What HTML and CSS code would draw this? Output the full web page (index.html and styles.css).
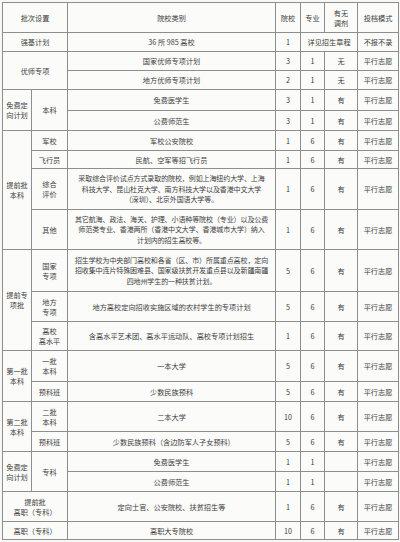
FILE: index.html
```html
<!DOCTYPE html>
<html lang="zh">
<head>
<meta charset="utf-8">
<link rel="stylesheet" href="styles.css">
</head>
<body>
<table class="t">
<colgroup>
<col class="c1"><col class="c2"><col class="c3"><col class="c4"><col class="c5"><col class="c6"><col class="c7">
</colgroup>
<tr class="h30"><td colspan="2">批次设置</td><td>院校类别</td><td>院校</td><td>专业</td><td>有无<br>调剂</td><td>投档模式</td></tr>
<tr class="h19"><td colspan="2">强基计划</td><td>36 所 985 高校</td><td>1</td><td colspan="2">详见招生章程</td><td>不报不录</td></tr>
<tr class="h19"><td colspan="2" rowspan="2">优师专项</td><td>国家优师专项计划</td><td>3</td><td>1</td><td>无</td><td>平行志愿</td></tr>
<tr class="h19"><td>地方优师专项计划</td><td>2</td><td>1</td><td>无</td><td>平行志愿</td></tr>
<tr class="h21"><td rowspan="2">免费定<br>向计划</td><td rowspan="2">本科</td><td>免费医学生</td><td>3</td><td>1</td><td>有</td><td>平行志愿</td></tr>
<tr class="h20"><td>公费师范生</td><td>3</td><td>1</td><td>有</td><td>平行志愿</td></tr>
<tr class="h20"><td rowspan="4">提前批<br>本科</td><td>军校</td><td>军校公安院校</td><td>1</td><td>6</td><td>有</td><td>平行志愿</td></tr>
<tr class="h18"><td>飞行员</td><td>民航、空军等招飞行员</td><td>1</td><td>6</td><td>有</td><td>平行志愿</td></tr>
<tr class="h41"><td>综合<br>评价</td><td class="long">采取综合评价试点方式录取的院校，例如上海纽约大学、上海<br>科技大学、昆山杜克大学、南方科技大学以及香港中文大学<br>（深圳）、北京外国语大学等。</td><td>1</td><td>6</td><td>有</td><td>平行志愿</td></tr>
<tr class="h40"><td>其他</td><td class="long">其它航海、政法、海关、护理、小语种等院校（专业）以及公费<br>师范类专业、香港两所（香港中文大学、香港城市大学）纳入<br>计划内的招生高校等。</td><td>1</td><td>6</td><td>有</td><td>平行志愿</td></tr>
<tr class="h42"><td rowspan="3">提前专<br>项批</td><td>国家<br>专项</td><td class="long">招生学校为中央部门高校和各省（区、市）所属重点高校，定向<br>招收集中连片特殊困难县、国家级扶贫开发重点县以及新疆南疆<br>四地州学生的一种扶贫计划。</td><td>5</td><td>6</td><td>有</td><td>平行志愿</td></tr>
<tr class="h30"><td>地方<br>专项</td><td>地方高校定向招收实施区域的农村学生的专项计划</td><td>5</td><td>6</td><td>有</td><td>平行志愿</td></tr>
<tr class="h29"><td>高校<br>高水平</td><td>含高水平艺术团、高水平运动队、高校专项计划招生</td><td>1</td><td>6</td><td>有</td><td>平行志愿</td></tr>
<tr class="h31"><td rowspan="2">第一批<br>本科</td><td>一批<br>本科</td><td>一本大学</td><td>5</td><td>6</td><td>有</td><td>平行志愿</td></tr>
<tr class="h20"><td>预科班</td><td>少数民族预科</td><td>5</td><td>6</td><td>有</td><td>平行志愿</td></tr>
<tr class="h30"><td rowspan="2">第二批<br>本科</td><td>二批<br>本科</td><td>二本大学</td><td>10</td><td>6</td><td>有</td><td>平行志愿</td></tr>
<tr class="h20"><td>预科班</td><td>少数民族预科（含边防军人子女预科)</td><td>5</td><td>6</td><td>有</td><td>平行志愿</td></tr>
<tr class="h20"><td rowspan="2">免费定<br>向计划</td><td rowspan="2">专科</td><td>免费医学生</td><td>1</td><td>1</td><td></td><td>平行志愿</td></tr>
<tr class="h20"><td>公费师范生</td><td>1</td><td>1</td><td></td><td>平行志愿</td></tr>
<tr class="h30"><td colspan="2">提前批<br>高职（专科）</td><td>定向士官、公安院校、扶贫招生等</td><td>1</td><td>6</td><td>有</td><td>平行志愿</td></tr>
<tr class="h18"><td colspan="2">高职（专科）</td><td>高职大专院校</td><td>10</td><td>6</td><td>有</td><td>平行志愿</td></tr>
</table>
</body>
</html>
```

FILE: styles.css
```css
html, body {
  margin: 0;
  padding: 0;
  background: #f7f7f6;
}
body {
  padding: 2px 2px 0 2px;
  font-family: "Noto Sans CJK SC", "Noto Sans", sans-serif;
  color: #3c3c3c;
}
.t {
  border-collapse: collapse;
  table-layout: fixed;
  width: 396px;
  background: #fbfbfa;
}
.c1 { width: 29px; }
.c2 { width: 36px; }
.c3 { width: 208px; }
.c4 { width: 25px; }
.c5 { width: 24px; }
.c6 { width: 33px; }
.c7 { width: 41px; }
.t td {
  border: 1px solid #8e8e8e;
  padding: 0;
  text-align: center;
  vertical-align: middle;
  font-size: 7.2px;
  line-height: 10px;
  white-space: nowrap;
}
.t td.long {
  font-size: 7px;
  line-height: 10.5px;
  letter-spacing: -0.1px;
}
.h18 td { height: 17px; }
.h19 td { height: 18px; }
.h20 td { height: 19px; }
.h21 td { height: 20px; }
.h29 td { height: 28px; }
.h30 td { height: 29px; }
.h31 td { height: 30px; }
.h40 td { height: 39px; }
.h41 td { height: 40px; }
.h42 td { height: 41px; }
```
